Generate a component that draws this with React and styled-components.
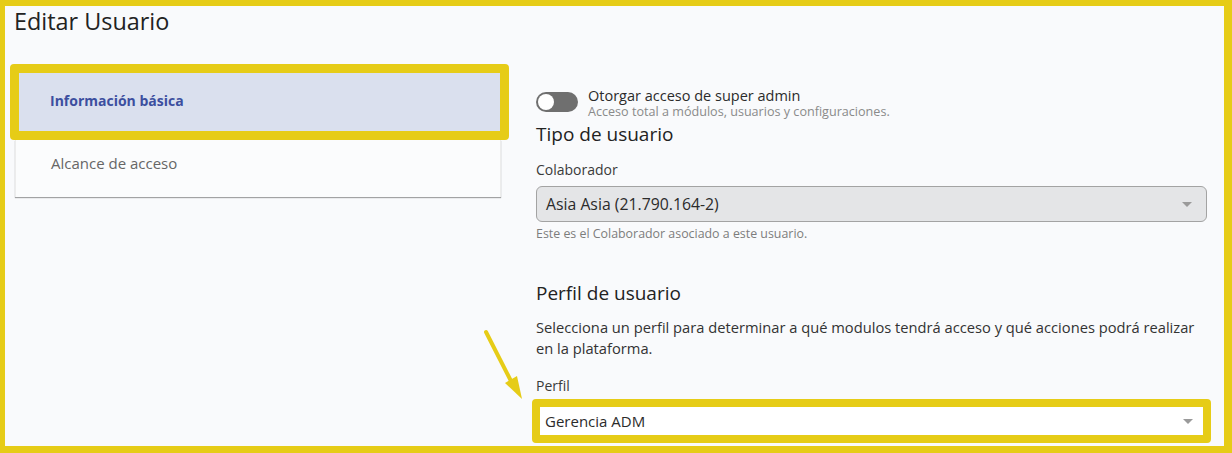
import styled, { createGlobalStyle } from 'styled-components';

const GlobalStyle = createGlobalStyle`
  html, body {
    margin: 0;
    padding: 0;
    background: #f9fafc;
  }
  body {
    font-family: 'Open Sans', Lato, sans-serif;
    color: #2b2b2b;
  }
`;

const highlight = '#e6cc17';

const Frame = styled.div`
  position: relative;
  box-sizing: border-box;
  width: 1232px;
  height: 453px;
  overflow: hidden;
  background: #f9fafc;
  border-style: solid;
  border-color: ${highlight};
  border-width: 6px 8px 7px 5px;
`;

const Title = styled.h1`
  margin: 0;
  padding-left: 9px;
  font-size: 23.4px;
  line-height: 30px;
  font-weight: 400;
  color: #222;
`;

const Layout = styled.div`
  display: grid;
  grid-template-columns: 486px 671px;
  column-gap: 35px;
  padding-left: 10px;
  margin-top: 28px;
`;

const Menu = styled.nav`
  display: flex;
  flex-direction: column;
`;

const MenuItem = styled.div`
  box-sizing: border-box;
  display: flex;

  ${({ $active }) =>
    $active
      ? `
    align-items: center;
    height: 76px;
    margin: 0 -8px 0 -5px;
    padding: 0 0 3px 31px;
    border: 9px solid ${highlight};
    border-radius: 4px;
    background: #dae0ee;
    color: #3c4f9f;
    font-size: 14px;
    font-weight: 700;
  `
      : `
    align-items: flex-start;
    height: 57px;
    padding: 13px 0 0 35px;
    background: #fbfcfd;
    color: #666;
    font-size: 15px;
    border-left: 1px solid #ececec;
    border-right: 1px solid #ececec;
    box-shadow: 0 1px 1px rgba(0, 0, 0, 0.35);
  `}
`;

const Form = styled.section`
  display: flex;
  flex-direction: column;
  padding-top: 23px;
`;

const ToggleRow = styled.div`
  display: flex;
  gap: 10px;
`;

const Switch = styled.div`
  position: relative;
  flex: none;
  width: 42px;
  height: 20px;
  margin-top: 5px;
  border-radius: 10px;
  background: #6f6f6f;

  &::after {
    content: '';
    position: absolute;
    left: 2px;
    top: 2px;
    width: 16px;
    height: 16px;
    border-radius: 50%;
    background: #fff;
  }
`;

const ToggleText = styled.div`
  display: flex;
  flex-direction: column;
`;

const ToggleLabel = styled.span`
  font-size: 14.5px;
  line-height: 18px;
  color: #2b2b2b;
`;

const ToggleHint = styled.span`
  font-size: 12.6px;
  line-height: 14px;
  color: #8a8a8a;
`;

const Heading = styled.h2`
  margin: ${({ $top }) => $top}px 0 0;
  font-size: 19px;
  line-height: 24px;
  font-weight: 400;
  color: #222;
`;

const Label = styled.label`
  display: block;
  margin-top: ${({ $top }) => $top}px;
  font-size: 14px;
  line-height: 20px;
  color: #3a3a3a;
`;

const Select = styled.div`
  box-sizing: border-box;
  position: relative;
  display: flex;
  align-items: center;
  margin-top: ${({ $top }) => $top}px;
  padding-left: 9px;
  font-size: 15px;
  color: #2b2b2b;

  ${({ $marked }) =>
    $marked
      ? `
    height: 44px;
    margin-left: -4px;
    margin-right: -4px;
    border: 8px solid ${highlight};
    border-radius: 4px;
    background: #fff;
    padding-left: 5px;
  `
      : `
    height: 36px;
    border: 1px solid #a3a3a3;
    border-radius: 6px;
    background: #e4e5e7;
    font-size: 15.8px;
  `}

  &::after {
    content: '';
    position: absolute;
    right: ${({ $marked }) => ($marked ? 10 : 14)}px;
    top: 50%;
    margin-top: -2px;
    border-left: 5px solid transparent;
    border-right: 5px solid transparent;
    border-top: 5px solid #9a9a9a;
  }
`;

const Helper = styled.p`
  margin: 4px 0 0;
  font-size: 12.4px;
  line-height: 16px;
  color: #7d7d7d;
`;

const Paragraph = styled.p`
  margin: 12px 0 0;
  font-size: 14.7px;
  line-height: 21px;
  color: #333;
`;

const Pointer = styled.svg`
  position: absolute;
  left: 470px;
  top: 315px;
`;

export default function App() {
  return (
    <>
      <GlobalStyle />
      <Frame>
        <Title>Editar Usuario</Title>
        <Layout>
          <Menu>
            <MenuItem $active>Información básica</MenuItem>
            <MenuItem>Alcance de acceso</MenuItem>
          </Menu>

          <Form>
            <ToggleRow>
              <Switch />
              <ToggleText>
                <ToggleLabel>Otorgar acceso de super admin</ToggleLabel>
                <ToggleHint>Acceso total a módulos, usuarios y configuraciones.</ToggleHint>
              </ToggleText>
            </ToggleRow>

            <Heading $top={3}>Tipo de usuario</Heading>
            <Label $top={14}>Colaborador</Label>
            <Select $top={6}>Asia Asia (21.790.164-2)</Select>
            <Helper>Este es el Colaborador asociado a este usuario.</Helper>

            <Heading $top={39}>Perfil de usuario</Heading>
            <Paragraph>
              Selecciona un perfil para determinar a qué modulos tendrá acceso y qué acciones podrá
              realizar en la plataforma.
            </Paragraph>
            <Label $top={17}>Perfil</Label>
            <Select $top={3} $marked>
              Gerencia ADM
            </Select>
          </Form>
        </Layout>

        <Pointer width="60" height="90" viewBox="0 0 60 90">
          <line x1="11" y1="11" x2="38" y2="64" stroke={highlight} strokeWidth="4" strokeLinecap="round" />
          <polygon points="30,62 42,55 47,78" fill={highlight} />
        </Pointer>
      </Frame>
    </>
  );
}
